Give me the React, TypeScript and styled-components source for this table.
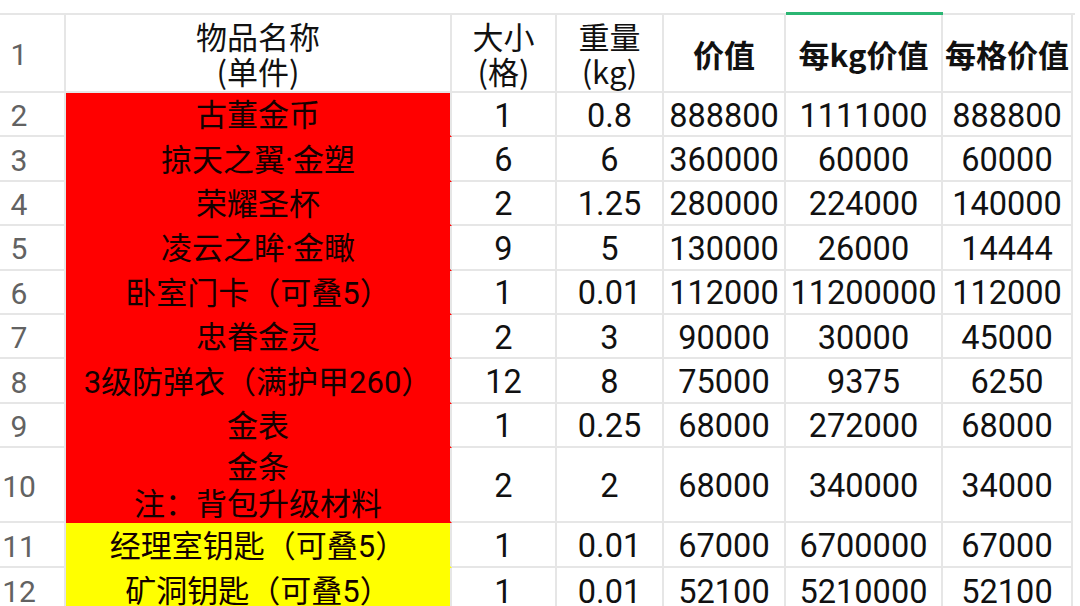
import React from 'react';
import styled, { createGlobalStyle } from 'styled-components';

type Fill = 'red' | 'yellow' | 'none';

interface Item {
  name: string[];
  fill: Fill;
  size: string;
  weight: string;
  value: string;
  perKg: string;
  perGrid: string;
}

const ITEMS: Item[] = [
  { name: ['古董金币'], fill: 'red', size: '1', weight: '0.8', value: '888800', perKg: '1111000', perGrid: '888800' },
  { name: ['掠天之翼·金塑'], fill: 'red', size: '6', weight: '6', value: '360000', perKg: '60000', perGrid: '60000' },
  { name: ['荣耀圣杯'], fill: 'red', size: '2', weight: '1.25', value: '280000', perKg: '224000', perGrid: '140000' },
  { name: ['凌云之眸·金瞰'], fill: 'red', size: '9', weight: '5', value: '130000', perKg: '26000', perGrid: '14444' },
  { name: ['卧室门卡（可叠5）'], fill: 'red', size: '1', weight: '0.01', value: '112000', perKg: '11200000', perGrid: '112000' },
  { name: ['忠眷金灵'], fill: 'red', size: '2', weight: '3', value: '90000', perKg: '30000', perGrid: '45000' },
  { name: ['3级防弹衣（满护甲260）'], fill: 'red', size: '12', weight: '8', value: '75000', perKg: '9375', perGrid: '6250' },
  { name: ['金表'], fill: 'red', size: '1', weight: '0.25', value: '68000', perKg: '272000', perGrid: '68000' },
  { name: ['金条', '注：背包升级材料'], fill: 'red', size: '2', weight: '2', value: '68000', perKg: '340000', perGrid: '34000' },
  { name: ['经理室钥匙（可叠5）'], fill: 'yellow', size: '1', weight: '0.01', value: '67000', perKg: '6700000', perGrid: '67000' },
  { name: ['矿洞钥匙（可叠5）'], fill: 'yellow', size: '1', weight: '0.01', value: '52100', perKg: '5210000', perGrid: '52100' },
];

const FILLS: Record<Fill, string> = {
  red: '#ff0000',
  yellow: '#ffff00',
  none: '#ffffff',
};

const GRID = '#e6e6e6';

const GlobalStyle = createGlobalStyle`
  html, body {
    margin: 0;
    padding: 0;
    background: #ffffff;
    overflow: hidden;
  }
  body {
    font-family: "Roboto", "Noto Sans CJK SC", sans-serif;
    color: #111111;
  }
`;

const Sheet = styled.div`
  width: 1080px;
  height: 606px;
  overflow: hidden;
  padding-top: 13px;
  box-sizing: border-box;
`;

const Grid = styled.div`
  display: grid;
  width: 1075px;
  grid-template-columns: 66px 386px 105px 107px 122px 157px 130px;
  border-top: 2px solid ${GRID};
`;

const Cell = styled.div<{ $fill?: Fill; $h: number }>`
  position: relative;
  height: ${({ $h }) => $h}px;
  box-sizing: border-box;
  display: flex;
  flex-direction: column;
  align-items: center;
  justify-content: center;
  text-align: center;
  padding-top: 3px;
  border-right: 2px solid ${GRID};
  border-bottom: 2px solid ${({ $fill }) => ($fill && $fill !== 'none' ? FILLS[$fill] : GRID)};
  background: ${({ $fill }) => FILLS[$fill || 'none']};
  white-space: nowrap;
`;

const RowNum = styled(Cell)`
  padding-right: 26px;
  font-size: 30px;
  color: #626262;
  font-family: "Roboto", sans-serif;
`;

const HeadCell = styled(Cell)<{ $bold?: boolean; $active?: boolean }>`
  padding-top: 0;
  font-family: "Noto Sans CJK SC", "Roboto", sans-serif;
  font-size: 31px;
  font-weight: ${({ $bold }) => ($bold ? 700 : 400)};
  line-height: 35px;
  color: #111111;

  ${({ $active }) =>
    $active &&
    `
    &::before {
      content: '';
      position: absolute;
      left: 0;
      right: -2px;
      top: -3px;
      height: 3px;
      background: #2bb673;
    }
  `}
`;

const NameCell = styled(Cell)`
  font-size: 31px;
  line-height: 37px;
  color: #140000;
`;

const NumCell = styled(Cell)`
  font-size: 32.5px;
  color: #111111;
`;

const HEADER_H = 78;
const ROW_H = [44.4, 44.4, 44.4, 44.4, 44.4, 44.4, 44.4, 44.4, 75, 45, 46];

export default function App() {
  return (
    <>
      <GlobalStyle />
      <Sheet>
        <Grid>
          <RowNum $h={HEADER_H}>1</RowNum>
          <HeadCell $h={HEADER_H}>
            <span>物品名称</span>
            <span>(单件)</span>
          </HeadCell>
          <HeadCell $h={HEADER_H}>
            <span>大小</span>
            <span>(格)</span>
          </HeadCell>
          <HeadCell $h={HEADER_H}>
            <span>重量</span>
            <span>(kg)</span>
          </HeadCell>
          <HeadCell $h={HEADER_H} $bold>价值</HeadCell>
          <HeadCell $h={HEADER_H} $bold $active>每kg价值</HeadCell>
          <HeadCell $h={HEADER_H} $bold>每格价值</HeadCell>

          {ITEMS.map((it, idx) => {
            const h = ROW_H[idx];
            return (
              <React.Fragment key={idx}>
                <RowNum $h={h}>{idx + 2}</RowNum>
                <NameCell $h={h} $fill={it.fill}>
                  {it.name.map((line) => (
                    <span key={line}>{line}</span>
                  ))}
                </NameCell>
                <NumCell $h={h}>{it.size}</NumCell>
                <NumCell $h={h}>{it.weight}</NumCell>
                <NumCell $h={h}>{it.value}</NumCell>
                <NumCell $h={h}>{it.perKg}</NumCell>
                <NumCell $h={h}>{it.perGrid}</NumCell>
              </React.Fragment>
            );
          })}
        </Grid>
      </Sheet>
    </>
  );
}
